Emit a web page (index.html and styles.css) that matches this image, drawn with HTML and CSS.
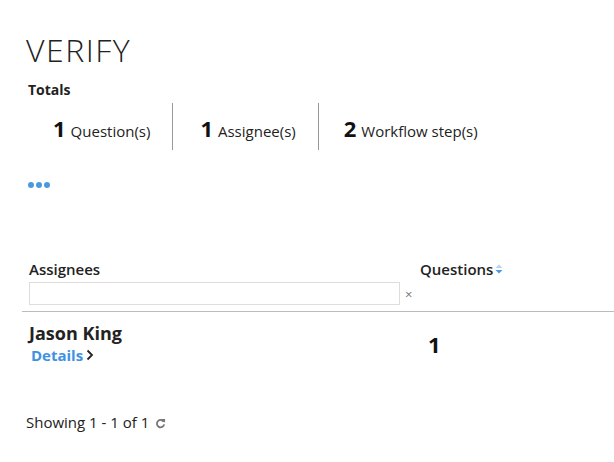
FILE: index.html
```html
<!DOCTYPE html>
<html lang="en">
<head>
  <meta charset="UTF-8">
  <title>Verify</title>
  <link rel="stylesheet" href="styles.css">
</head>
<body>
<div class="page">
  <h1 class="title">VERIFY</h1>
  <div class="totals-label">Totals</div>
  <div class="totals">
    <div class="stat"><span class="num">1</span> Question(s)</div>
    <div class="stat"><span class="num">1</span> Assignee(s)</div>
    <div class="stat"><span class="num">2</span> Workflow step(s)</div>
  </div>
  <div class="more"><span></span><span></span><span></span></div>

  <div class="table">
    <div class="thead">
      <div class="col-name">
        <div class="th">Assignees</div>
        <div class="filter"><input type="text"><span class="clear">&times;</span></div>
      </div>
      <div class="col-q">
        <div class="th">Questions<svg class="sort" width="8" height="10" viewBox="0 0 8 10"><path d="M0.5 4L4 0.5 7.5 4z" fill="#b7d4ef"/><path d="M0.5 6L4 9.5 7.5 6z" fill="#4a98e0"/></svg></div>
      </div>
    </div>
    <div class="row">
      <div class="col-name">
        <div class="name">Jason King</div>
        <a class="details" href="#">Details<svg width="8" height="12" viewBox="0 0 8 12"><path d="M1.5 1.5L6 6 1.5 10.5" fill="none" stroke="#222" stroke-width="1.8"/></svg></a>
      </div>
      <div class="col-q count">1</div>
    </div>
  </div>

  <div class="footer">Showing 1 - 1 of 1 <svg class="refresh" width="11" height="11" viewBox="0 0 12 12"><path d="M9.6 4.2A4 4 0 1 0 10 7" fill="none" stroke="#777" stroke-width="2"/><path d="M7 1.2h4v4z" fill="#777"/></svg></div>
</div>
</body>
</html>
```

FILE: styles.css
```css
body {
  margin: 0;
  font-family: "Open Sans", sans-serif;
  color: #222;
  background: #fff;
}

.page {
  padding: 28px 0 0 26px;
}

.title {
  margin: 0;
  font-weight: 300;
  font-size: 32px;
  line-height: 44px;
  letter-spacing: 1.5px;
  color: #222;
}

.totals-label {
  margin: 8px 0 0 2px;
  font-size: 14px;
  font-weight: 700;
  line-height: 20px;
}

.totals {
  display: flex;
  margin-top: 3px;
}

.stat {
  display: flex;
  align-items: baseline;
  gap: 5px;
  height: 47px;
  line-height: 50px;
  padding: 0 22px 0 27px;
  border-right: 1px solid #999;
  font-size: 15px;
}

.stat:last-child {
  border-right: none;
  padding-left: 25px;
}

.num {
  font-size: 22px;
  font-weight: 700;
  color: #111;
}

.more {
  display: flex;
  gap: 2px;
  margin: 32px 0 0 2px;
}

.more span {
  width: 6px;
  height: 6px;
  border-radius: 50%;
  background: #4a98e0;
}

.table {
  margin-top: 70px;
  margin-left: -4px;
}

.thead,
.row {
  display: flex;
}

.thead {
  border-bottom: 1px solid #bbb;
  padding-bottom: 6px;
}

.col-name {
  width: 391px;
  padding-left: 7px;
}

.col-q {
  flex: 1;
}

.th {
  font-size: 15px;
  font-weight: 600;
  line-height: 22px;
  display: flex;
  align-items: center;
}

.sort {
  margin-left: 2px;
}

.filter {
  display: flex;
  align-items: center;
  margin-top: 2px;
}

.filter input {
  width: 371px;
  height: 23px;
  box-sizing: border-box;
  border: 1px solid #ddd;
  padding: 0 4px;
  font-family: inherit;
}

.clear {
  margin-left: 5px;
  font-size: 13px;
  color: #777;
}

.row {
  padding-top: 9px;
  align-items: center;
}

.name {
  font-size: 18px;
  font-weight: 700;
  line-height: 24px;
}

.details {
  display: flex;
  align-items: center;
  gap: 3px;
  margin-left: 2px;
  font-size: 15px;
  font-weight: 700;
  line-height: 20px;
  color: #3d92e3;
  text-decoration: none;
}

.count {
  padding: 2px 0 0 8px;
  font-size: 22px;
  font-weight: 700;
  color: #111;
}

.footer {
  margin-top: 47px;
  font-size: 15px;
  line-height: 20px;
}

.refresh {
  vertical-align: -1px;
  margin-left: 2px;
}
```
